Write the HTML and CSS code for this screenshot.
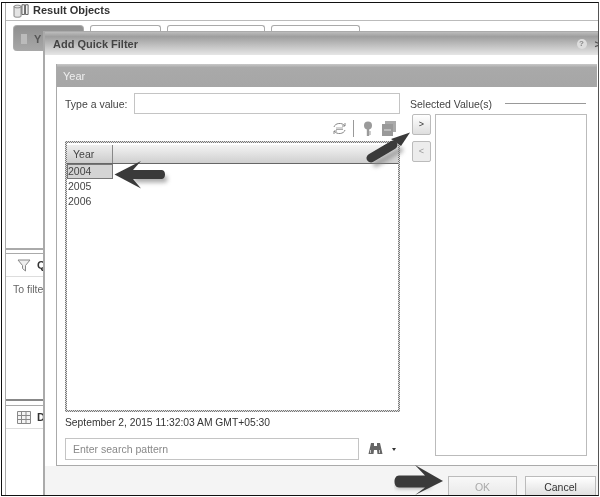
FILE: index.html
```html
<!DOCTYPE html>
<html lang="en">
<head>
<meta charset="utf-8">
<title>Add Quick Filter</title>
<link rel="stylesheet" href="styles.css">
</head>
<body>
<div class="shot">
  <div class="back">
    <div class="objects-title">
      <svg class="ico-objects" width="17" height="15" viewBox="0 0 19 17"><path d="M1 4c0-2 8-2 8 0v11c0 1.500-8 1.500-8 0z" fill="#e4e4e4" stroke="#777"/><path d="M1 4c0 2 8 2 8 0" fill="none" stroke="#777"/><path d="M10 2h3v11h-3zM14 2h3v11h-3z" fill="#f4f4f4" stroke="#555"/></svg>
      <b>Result Objects</b>
    </div>
    <div class="tabs">
      <div class="tab tab-on"><span class="tab-glyph"></span>Y</div>
      <div class="tab tab-a"></div>
      <div class="tab tab-b"></div>
      <div class="tab tab-c"></div>
    </div>
    <div class="tab-body"></div>
    <div class="side-panel side-quick">
      <div class="side-head">
        <svg width="14" height="13" viewBox="0 0 14 13"><path d="M1 1h12L8.500 6.500V12L5.500 9.500v-3z" fill="#efefef" stroke="#888"/></svg>
        <b>Q</b>
      </div>
      <div class="side-text">To filter</div>
    </div>
    <div class="side-panel side-data">
      <div class="side-head">
        <svg width="14" height="13" viewBox="0 0 14 13"><path d="M.5.500h13v12H.500zM.5 4.500h13M.5 8.500h13M4.500.5v12M9 .5v12" fill="#f4f4f4" stroke="#888"/></svg>
        <b>Da</b>
      </div>
    </div>
  </div>

  <div class="dialog">
    <div class="dialog-head">
      <b>Add Quick Filter</b>
      <span class="help">?</span>
      <span class="close">&gt;</span>
    </div>
    <div class="dialog-body">
      <div class="panel">
        <div class="panel-head">Year</div>
        <div class="panel-body">
          <div class="col-main">
            <div class="value-row">
              <label class="value-label">Type a value:</label>
              <div class="field value-field"></div>
            </div>
            <div class="toolbar">
              <svg width="15" height="15" viewBox="0 0 15 15" fill="none" stroke="#888"><path d="M2 6c1-4 8-5 11-1M13 2v3h-3M13 9c-1 4-8 5-11 1M2 13v-3h3"/><path d="M4 7h7M4 8.500h7" stroke="#aaa"/></svg>
              <span class="tool-sep"></span>
              <svg width="10" height="16" viewBox="0 0 10 16"><circle cx="5" cy="4.500" r="4" fill="#9a9a9a"/><path d="M3.800 8h2.400v7H3.800z" fill="#9a9a9a"/><path d="M6 11h2M6 13h2" stroke="#9a9a9a"/></svg>
              <svg class="tool-last" width="14" height="15" viewBox="0 0 14 15"><path d="M3 0h11v11H3z" fill="#aaa"/><path d="M0 3h11v12H0z" fill="#999"/><path d="M2 9h7" stroke="#ddd"/></svg>
            </div>
            <div class="grid-frame">
              <div class="grid-inner">
                <div class="grid-head">
                  <div class="grid-col">Year</div>
                </div>
                <div class="grid-row grid-row-on">2004</div>
                <div class="grid-row">2005</div>
                <div class="grid-row">2006</div>
              </div>
            </div>
            <div class="stamp">September 2, 2015 11:32:03 AM GMT+05:30</div>
            <div class="search-row">
              <div class="field search-field">Enter search pattern</div>
              <svg class="binoculars" width="15" height="14" viewBox="0 0 15 14"><path d="M3 1h3v3h3V1h3l2.500 11h-5L9 8H6l-.500 4h-5z" fill="#666"/><path d="M2.500 8v3M11.500 8v3" stroke="#ccc"/></svg>
              <span class="caret"></span>
            </div>
          </div>
          <div class="col-moves">
            <div class="move">&gt;</div>
            <div class="move move-off">&lt;</div>
          </div>
          <div class="col-selected">
            <div class="selected-title"><span>Selected Value(s)</span><i></i></div>
            <div class="selected-box"></div>
          </div>
        </div>
      </div>
      <div class="dialog-foot">
        <div class="btn btn-off">OK</div>
        <div class="btn">Cancel</div>
      </div>
    </div>
  </div>

  <svg class="arrow arrow-go" width="60" height="45" viewBox="0 0 60 45"><path class="arrow-shade" d="M10 36L34 22" stroke="#888" stroke-width="6" stroke-linecap="round"/><path d="M5 30L27 17" stroke="#3a3a3a" stroke-width="9" stroke-linecap="round"/><path d="M44 4.500L25 11l10 7z" fill="#3a3a3a"/></svg>
  <svg class="arrow arrow-row" width="60" height="34" viewBox="0 0 60 34"><path class="arrow-shade" d="M24 19h27" stroke="#888" stroke-width="7" stroke-linecap="round"/><path d="M1.500 14.500L28 1l-8 9h29c4 0 4 9 0 9H20l8 9.500z" fill="#3a3a3a"/></svg>
  <svg class="arrow arrow-ok" width="56" height="32" viewBox="0 0 56 32"><path class="arrow-shade" d="M5 20h28" stroke="#888" stroke-width="7" stroke-linecap="round"/><path d="M49 16L21 0l10 10.500H5c-6 0-6 12 0 12h26L21 30z" fill="#3a3a3a"/></svg>
</div>
</body>
</html>
```
FILE: styles.css
```css
* { box-sizing: border-box; }
html, body { margin: 0; padding: 0; background: #fff; }
body { width: 600px; height: 497px; overflow: hidden; font-family: "Liberation Sans", Arial, sans-serif; color: #333; }
.shot {
  position: relative;
  width: 598px;
  height: 494px;
  margin: 2px 0 0 1px;
  border: 1.500px solid #111;
  border-right: 1.500px solid #555;
  overflow: hidden;
  background: #fff;
  filter: blur(.35px);
}
.back {
  display: flex;
  flex-direction: column;
  height: 100%;
  margin-left: 3px;
  border-left: 1px solid #aaa;
}
.objects-title {
  display: flex;
  align-items: center;
  gap: 3px;
  height: 17px;
  padding: 0 0 3px 7px;
  font-size: 11px;
  color: #333;
  flex: none;
}
.tabs { display: flex; gap: 6px; padding: 4px 0 0 7px; height: 10px; flex: none; border-top: 1px solid #bbb; }
.tab {
  height: 26px;
  border: 1px solid #aaa;
  border-bottom: 0;
  border-radius: 3px 3px 0 0;
  background: #fff;
  font-size: 11px;
  flex: none;
}
.tab-on {
  width: 71px;
  display: flex;
  align-items: center;
  gap: 7px;
  padding-left: 7px;
  background: linear-gradient(#8f8f8f, #a8a8a8);
  color: #555;
  border-radius: 4px;
  font-weight: bold;
}
.tab-glyph { width: 6px; height: 10px; background: #bbb; flex: none; }
.tab-a { width: 71px; }
.tab-b { width: 98px; }
.tab-c { width: 89px; }
.tab-body { height: 220px; flex: none; border-bottom: 2px solid #aaa; }
.side-panel { border-top: 1px solid #aaa; background: #fff; }
.side-quick { height: 148px; margin-top: 3px; border-bottom: 2px solid #888; flex: none; }
.side-data { flex: 1; margin-top: 4px; }
.side-head {
  display: flex;
  align-items: center;
  gap: 6px;
  height: 23px;
  padding-left: 11px;
  border-bottom: 1px solid #ddd;
  font-size: 11px;
}
.side-text { padding: 6px 0 0 7px; font-size: 10.500px; color: #666; white-space: nowrap; }

.dialog {
  position: absolute;
  left: 41px;
  top: 28px;
  width: 580px;
  height: 470px;
  display: flex;
  flex-direction: column;
  background: #fff;
  border: 1px solid #aaa;
  border-width: 1px 0 0 2px;
}
.dialog-head {
  display: flex;
  align-items: center;
  height: 23px;
  flex: none;
  padding-left: 8px;
  background: linear-gradient(#bcbcbc, #9e9e9e 20%, #cfcfcf 75%, #e6e6e6);
  font-size: 11px;
  color: #444;
}
.dialog-head b { flex: 1; }
.help {
  width: 10px;
  height: 10px;
  border-radius: 50%;
  background: #ddd;
  color: #888;
  font-size: 8px;
  font-weight: bold;
  line-height: 10px;
  text-align: center;
  margin-right: 8px;
}
.close { margin-right: 22px; font-size: 11px; color: #555; font-weight: bold; }
.dialog-body { flex: 1; display: flex; flex-direction: column; padding-top: 9px; min-height: 0; }
.panel {
  width: 541px;
  margin-left: 11px;
  height: 402px;
  flex: none;
  border: 1px solid #aaa;
  border-top: 0;
  border-right: 0;
  display: flex;
  flex-direction: column;
}
.panel-head {
  height: 23px;
  flex: none;
  padding-left: 6px;
  display: flex;
  align-items: center;
  background: linear-gradient(#c8c8c8, #a9a9a9 15%, #a6a6a6);
  color: #eee;
  font-size: 11px;
}
.panel-body { flex: 1; display: flex; padding: 6px 0 0 8px; min-height: 0; }
.col-main { width: 335px; flex: none; display: flex; flex-direction: column; }
.value-row { display: flex; align-items: center; height: 21px; flex: none; }
.value-label { width: 69px; font-size: 10.500px; color: #444; flex: none; }
.field { border: 1px solid #c4c4c4; background: #fff; }
.value-field { flex: 1; height: 21px; }
.toolbar { display: flex; align-items: center; justify-content: flex-end; gap: 6px; height: 27px; padding: 2px 4px 0 0; flex: none; }
.tool-sep { width: 1px; height: 17px; background: #999; margin-right: 3px; }
.tool-last { margin-left: 3px; }
.grid-frame {
  display: flex;
  height: 271px;
  flex: none;
  padding: 2px;
  background: repeating-conic-gradient(#777 0 25%, #ddd 0 50%) 0 0 / 2px 2px;
}
.grid-inner { flex: 1; background: #fff; padding-top: 2px; }
.grid-head { height: 19px; background: linear-gradient(#f4f4f4, #cfcfcf); border-bottom: 1px solid #666; }
.grid-col { width: 46px; height: 100%; padding: 3px 0 0 6px; font-size: 10.500px; color: #444; border-right: 1px solid #888; background: linear-gradient(#eee, #ccc); }
.grid-row { height: 15px; width: 46px; padding-left: 1px; font-size: 10.500px; line-height: 15px; color: #444; }
.grid-row-on { background: #d4d4d4; border: 1px solid #777; padding-left: 0; line-height: 13px; }
.stamp { margin-top: 5px; height: 15px; font-size: 10.300px; color: #333; flex: none; white-space: nowrap; }
.search-row { display: flex; align-items: center; margin-top: 6px; flex: none; }
.search-field { width: 294px; height: 22px; padding: 4px 0 0 7px; font-size: 10.500px; color: #888; }
.binoculars { margin-left: 9px; }
.caret { width: 0; height: 0; margin-left: 9px; border: 2.500px solid transparent; border-top: 3px solid #333; border-bottom: 0; }
.col-moves { width: 24px; padding: 21px 0 0 12px; flex: none; display: flex; flex-direction: column; gap: 6px; box-sizing: content-box; }
.move {
  width: 19px;
  height: 21px;
  border: 1px solid #bbb;
  border-radius: 2px;
  background: linear-gradient(#fff, #dedede);
  font-size: 9px;
  line-height: 19px;
  text-align: center;
  color: #333;
}
.move-off { background: #ececec; color: #999; }
.col-selected { width: 176px; flex: none; margin-left: -26px; }
.selected-title { display: flex; align-items: center; gap: 13px; height: 21px; font-size: 10.500px; color: #444; white-space: nowrap; }
.selected-title i { width: 81px; height: 1px; background: #999; flex: none; }
.selected-box { margin: 0 0 0 25px; width: 152px; height: 342px; border: 1px solid #bbb; background: #fff; }
.dialog-foot {
  flex: 1;
  display: flex;
  gap: 8px;
  padding: 10px 0 0 403px;
  background: #f4f4f4;
}
.btn {
  width: 71px;
  height: 22px;
  border: 1px solid #bbb;
  background: linear-gradient(#fff, #ddd);
  font-size: 10.500px;
  line-height: 20px;
  text-align: center;
  color: #333;
  flex: none;
}
.btn-off { width: 69px; color: #aaa; background: linear-gradient(#f8f8f8, #e8e8e8); }
.arrow { position: absolute; }
.arrow-shade { filter: blur(2px); opacity: .7; }
.arrow-go { left: 364px; top: 125px; }
.arrow-row { left: 111px; top: 157px; }
.arrow-ok { left: 392px; top: 462px; }
```
